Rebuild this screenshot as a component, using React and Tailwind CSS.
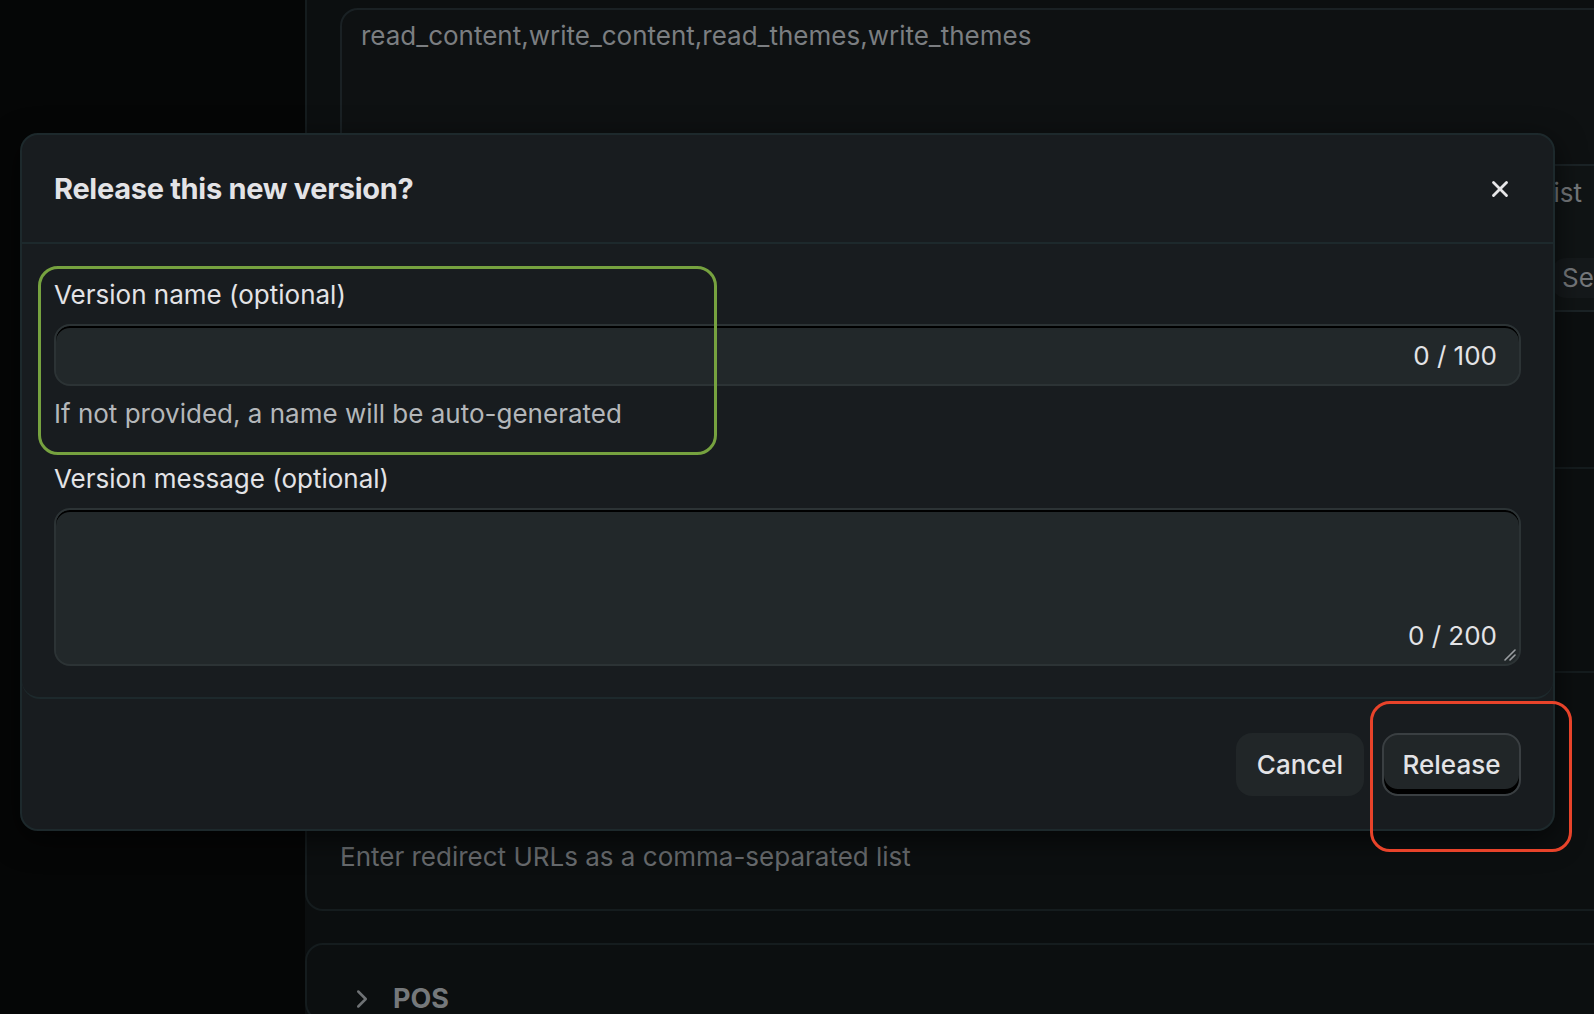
import { X, ChevronRight } from "lucide-react";

const ReleaseModal = () => {
  return (
    <div className="absolute left-[20px] top-[133px] w-[1535px] rounded-[18px] border-2 border-[#1d292c] bg-[#181c1f] text-[#e3e3e6] shadow-[0_8px_30px_rgba(0,0,0,0.6)]">
      {/* header */}
      <div className="flex h-[107px] items-center justify-between pl-[32px] pr-[40px]">
        <h2 className="text-[29px] font-bold tracking-[-0.3px]">Release this new version?</h2>
        <X size={26} strokeWidth={2.6} className="text-[#e6e6e8]" />
      </div>
      {/* body */}
      <div className="rounded-b-[18px] border-y-2 border-[#1d292c] px-[32px] pb-[31px] pt-[31px]">
        <label className="block text-[26px] leading-[40px]">Version name (optional)</label>
        <div className="mt-[9px] flex h-[62px] items-center rounded-[16px] border-2 border-[#2c3335] bg-[#22282a] pl-[24px] pr-[22px] shadow-[inset_0_2px_0_#000]">
          <input className="min-w-0 flex-1 bg-transparent text-[26px] outline-none" />
          <span className="text-[26px] text-[#e3e3e6]">0 / 100</span>
        </div>
        <p className="mt-[8px] text-[26px] leading-[40px] text-[#b4b7ba]">
          If not provided, a name will be auto-generated
        </p>
        <label className="mt-[25px] block text-[26px] leading-[40px]">Version message (optional)</label>
        <div className="relative mt-[9px] flex h-[158px] flex-col rounded-[16px] border-2 border-[#2c3335] bg-[#22282a] pl-[24px] pr-[22px] shadow-[inset_0_2px_0_#000]">
          <textarea className="min-h-0 flex-1 resize-none bg-transparent text-[26px] outline-none" />
          <span className="self-end pb-[10px] text-[26px] leading-[36px] text-[#e3e3e6]">0 / 200</span>
          <svg className="absolute bottom-[3px] right-[3px]" width="14" height="14" viewBox="0 0 14 14">
            <path d="M13 3 L3 13 M13 8 L8 13" stroke="#9a9ea1" strokeWidth="1.6" strokeLinecap="round" />
          </svg>
        </div>
      </div>
      {/* footer */}
      <div className="flex h-[130px] items-center justify-end gap-[18px] px-[32px]">
        <button className="h-[63px] w-[128px] rounded-[16px] bg-[#212628] text-[26px] font-medium text-[#e3e3e6]">
          Cancel
        </button>
        <button className="h-[63px] w-[139px] rounded-[16px] border-2 border-[#3a3f42] bg-[#212628] text-[26px] font-medium text-[#e3e3e6] shadow-[inset_0_-5px_0_#000]">
          Release
        </button>
      </div>
    </div>
  );
};

const App = () => {
  return (
    <div className="relative flex h-[1014px] w-[1594px] overflow-hidden bg-[#0b0e0f] font-['Inter',sans-serif]">
      <div className="w-[305px] shrink-0 bg-[#050606]"></div>
      <div className="flex flex-1 flex-col">
        <div className="mr-[-40px] mt-[-30px] rounded-[18px] border-2 border-[#151c1e] bg-[#0c0f10]">
          <div className="pl-[33px] pt-[36px]">
            <div className="h-[160px] rounded-[18px] border-2 border-[#1a2124] bg-[#0e1112] pl-[19px] pt-[6px]">
              <span className="text-[26px] leading-[40px] text-[#7b7e81]">
                read_content,write_content,read_themes,write_themes
              </span>
            </div>
          </div>
          <div className="mt-[-4px] flex h-[148px] flex-col border-y-2 border-[#1b2326] bg-[#101415] pr-[50px]">
            <span className="mt-[7px] self-end text-[26px] leading-[40px] text-[#75787b]">
              comma-separated list
            </span>
            <div className="mr-[-163px] mt-[45px] self-end rounded-[14px] bg-[#15191b] px-[10px] text-[26px] leading-[40px] text-[#75787b]">
              Select scopes
            </div>
          </div>
          <div className="h-[157px] border-b-2 border-[#151c1e]"></div>
          <div className="h-[204px] border-b-2 border-[#151c1e]"></div>
          <div className="pb-[32px] pl-[33px] pt-[164px] text-[26px] leading-[40px] text-[#686b6e]">
            Enter redirect URLs as a comma-separated list
          </div>
        </div>
        <div className="mr-[-40px] mt-[32px] flex h-[140px] items-start gap-[16px] rounded-[18px] border-2 border-[#151c1e] bg-[#0c0f10] pl-[40px] pt-[34px]">
          <ChevronRight size={30} strokeWidth={2} className="mt-[5px] text-[#6f7275]" />
          <span className="text-[27px] font-bold leading-[40px] text-[#75787b]">POS</span>
        </div>
      </div>
      <ReleaseModal />
      {/* annotation boxes */}
      <div className="pointer-events-none absolute left-[38px] top-[266px] h-[189px] w-[679px] rounded-[20px] border-[3px] border-[#76a23f]"></div>
      <div className="pointer-events-none absolute left-[1370px] top-[701px] h-[151px] w-[202px] rounded-[20px] border-[3px] border-[#e8432a]"></div>
    </div>
  );
};

export default App;
